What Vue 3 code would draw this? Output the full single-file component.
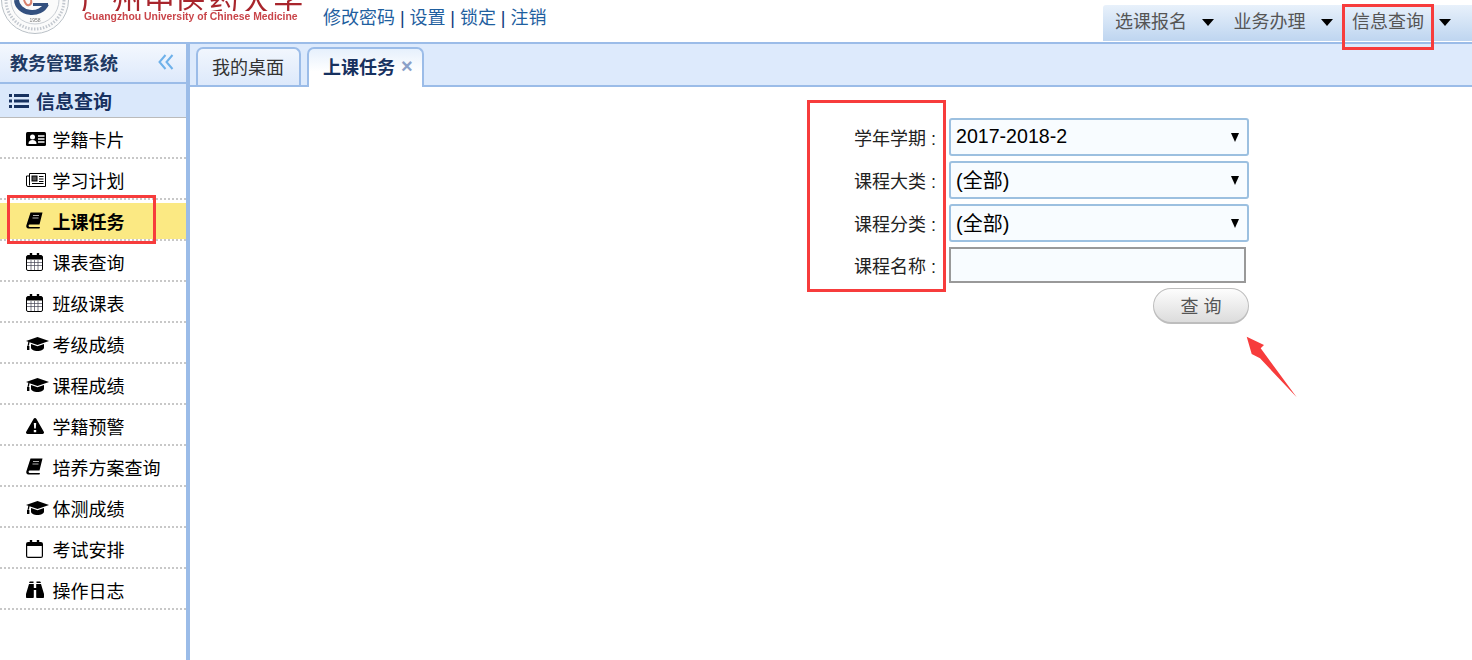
<script setup>
const menus = ['选课报名', '业务办理', '信息查询']
const links = ['修改密码', '设置', '锁定', '注销']
const items = [
  { name: '学籍卡片', icon: 'card' },
  { name: '学习计划', icon: 'news' },
  { name: '上课任务', icon: 'book', active: true },
  { name: '课表查询', icon: 'cal' },
  { name: '班级课表', icon: 'cal' },
  { name: '考级成绩', icon: 'cap' },
  { name: '课程成绩', icon: 'cap' },
  { name: '学籍预警', icon: 'warn' },
  { name: '培养方案查询', icon: 'book' },
  { name: '体测成绩', icon: 'cap' },
  { name: '考试安排', icon: 'calo' },
  { name: '操作日志', icon: 'bino' }
]
const selects = [
  { label: '学年学期', value: '2017-2018-2', cls: 'num' },
  { label: '课程大类', value: '(全部)', cls: 'cjk' },
  { label: '课程分类', value: '(全部)', cls: 'cjk' }
]
</script>

<template>
  <div class="page">
    <header class="header">
      <div class="logo">
        <svg class="emblem" width="70" height="36" viewBox="0 0 70 36">
          <circle cx="35" cy="0" r="33.500" fill="#fbfbfb" stroke="#b9c0c6" stroke-width="1" />
          <circle cx="35" cy="0" r="29" fill="none" stroke="#c3c8cf" stroke-width="3" stroke-dasharray="1.500 1.500" />
          <circle cx="35" cy="0" r="24" fill="none" stroke="#c9ced4" stroke-width="1" />
          <path d="M16.500 0a15.500 13 0 0 0 30 4" fill="none" stroke="#33507f" stroke-width="5" />
          <path d="M33 3h15v3H33z" fill="#33507f" />
          <path d="M24 0q2 6 5 5q3-1 2-5" fill="none" stroke="#d9806c" stroke-width="2" />
          <text x="35" y="22" class="year" text-anchor="middle">1958</text>
        </svg>
        <div class="wordmark">
          <div class="cn">广州中医药大学</div>
          <div class="en">Guangzhou University of Chinese Medicine</div>
        </div>
      </div>
      <nav class="links">
        <template v-for="(l, i) in links" :key="l">
          <span v-if="i" class="sep">|</span>
          <a>{{ l }}</a>
        </template>
      </nav>
      <nav class="menu">
        <div v-for="m in menus" :key="m" class="menu-item">
          <span>{{ m }}</span><i class="caret"></i>
        </div>
      </nav>
    </header>

    <div class="body">
      <aside class="side">
        <div class="side-title">
          <span>教务管理系统</span>
          <svg width="16" height="16" viewBox="0 0 16 16" fill="none" stroke="#6eb1ea" stroke-width="2">
            <path d="M7.500 1L1.500 8l6 7M14.500 1L8.500 8l6 7" />
          </svg>
        </div>
        <div class="side-head">
          <svg width="20" height="16" viewBox="0 0 20 16" fill="#17315f">
            <path d="M0 1h3v3H0zM5 1h15v3H5zM0 6.500h3v3H0zM5 6.500h15v3H5zM0 12h3v3H0zM5 12h15v3H5z" />
          </svg>
          <span>信息查询</span>
        </div>
        <ul class="list">
          <li v-for="it in items" :key="it.name" :class="['row', { active: it.active }]">
            <span class="ic">
              <svg v-if="it.icon === 'card'" width="20" height="16" viewBox="0 0 20 16">
                <rect y="1" width="20" height="14" rx="1.500" fill="#000" />
                <circle cx="6.500" cy="6" r="2.500" fill="#fff" />
                <path d="M2.500 13c0-3 1.500-4 4-4s4 1 4 4z" fill="#fff" />
                <path d="M12 5h6.500M12 8h6.500M12 11h6.500" stroke="#fff" stroke-width="1.500" />
              </svg>
              <svg v-else-if="it.icon === 'news'" width="20" height="16" viewBox="0 0 20 16" fill="none" stroke="#000">
                <path d="M3.500 1.500h16v13H2a1.500 1.500 0 0 1-1.500-1.500V4h3z" />
                <path d="M3.500 4v9.500" />
                <rect x="6" y="4" width="5" height="5" fill="#555" stroke="#000" />
                <path d="M13 4.500h4.500M13 7h4.500M13 9.500h4.500M6 11.500h11.500" />
              </svg>
              <svg v-else-if="it.icon === 'book'" width="17" height="17" viewBox="0 0 17 17">
                <path d="M4.500 .5H16.500L13.500 12.500H3.500a1.300 1.300 0 0 0 0 2.500h10.500l-.5 1.500H2.500C.7 16.500 0 15 .3 13.500z" fill="#000" />
                <path d="M7 3.500h6M6.500 6h6" stroke="#ddd" stroke-width=".8" />
              </svg>
              <svg v-else-if="it.icon === 'cal'" width="17" height="18" viewBox="0 0 17 18">
                <rect x=".5" y="2.500" width="16" height="15" rx="1.500" fill="#fff" stroke="#000" />
                <path d="M1 3h15v3.500H1z" fill="#000" />
                <path d="M5 0v5M12 0v5" stroke="#000" stroke-width="2.400" />
                <path d="M1 9.500h15M1 12.500h15M5 7v10M8.500 7v10M12 7v10" stroke="#445" stroke-width=".7" />
              </svg>
              <svg v-else-if="it.icon === 'cap'" width="23" height="14" viewBox="0 0 23 14">
                <path d="M11.500 0L23 4l-11.500 4L3.500 5.200 3 8.500 1.500 9l.8-4.200L0 4z" fill="#000" />
                <path d="M5 7l6.500 2.200L18 7v3.500C18 12.500 15 14 11.500 14S5 12.500 5 10.500z" fill="#000" />
                <path d="M1 9h2.400v4H1z" fill="#000" />
              </svg>
              <svg v-else-if="it.icon === 'warn'" width="18" height="16" viewBox="0 0 18 16">
                <path d="M9 0a1.500 1.500 0 0 1 1.300.8l7.500 13a1.500 1.500 0 0 1-1.300 2.200h-15a1.500 1.500 0 0 1-1.300-2.200L7.700.8A1.500 1.500 0 0 1 9 0z" fill="#000" />
                <path d="M7.800 5h2.400l-.4 5.500H8.200zM7.800 12h2.400v2.200H7.800z" fill="#fff" />
              </svg>
              <svg v-else-if="it.icon === 'calo'" width="17" height="18" viewBox="0 0 17 18">
                <rect x=".6" y="2.600" width="15.800" height="14.800" rx="1.500" fill="#fff" stroke="#000" stroke-width="1.200" />
                <path d="M1 3h15v3H1z" fill="#000" />
                <path d="M5 0v5M12 0v5" stroke="#000" stroke-width="2.400" />
              </svg>
              <svg v-else width="18" height="17" viewBox="0 0 18 17">
                <path d="M3 2h4.500V.5H3.800zM10.500 2H15L14.200.5H10.500z" fill="#000" />
                <path d="M3 3h4.800v4h2.400V3H15l3 10v3c0 .6-.4 1-1 1h-5.800c-.6 0-1-.4-1-1V9H7.800v7c0 .6-.4 1-1 1H1c-.6 0-1-.4-1-1v-3z" fill="#000" />
              </svg>
            </span>
            <span>{{ it.name }}</span>
          </li>
        </ul>
      </aside>

      <main class="main">
        <div class="tabs">
          <div class="tab">我的桌面</div>
          <div class="tab current">上课任务<span class="close">×</span></div>
        </div>
        <form class="form" @submit.prevent>
          <template v-for="s in selects" :key="s.label">
            <label class="lbl">{{ s.label }} :</label>
            <div class="sel">
              <select :class="['ctl', s.cls]">
                <option>{{ s.value }}</option>
              </select>
              <i class="sel-caret"></i>
            </div>
          </template>
          <label class="lbl">课程名称 :</label>
          <input class="txt" type="text" />
          <div class="act">
            <button class="btn" type="button">查 询</button>
          </div>
        </form>
      </main>
    </div>

    <div class="mark mark-menu"></div>
    <div class="mark mark-side"></div>
    <div class="mark mark-form"></div>
    <svg class="arrow" width="60" height="70" viewBox="0 0 60 70">
      <path d="M6.700 6.700L24 15l-3.300 3.300L56.700 67.300 20 28.300 11.700 24z" fill="#f73c3c" />
    </svg>
  </div>
</template>

<style>
html, body { margin: 0; background: #fff; }
</style>

<style scoped>
.page {
  position: relative;
  width: 1472px;
  height: 660px;
  overflow: hidden;
  display: flex;
  flex-direction: column;
  background: #fff;
  font-family: "Liberation Sans", "Noto Sans CJK SC", sans-serif;
  font-size: 18px;
  color: #000;
}
.header {
  flex: none;
  height: 42px;
  display: flex;
  align-items: flex-start;
  overflow: hidden;
}
.logo { display: flex; width: 323px; flex: none; }
.emblem { flex: none; display: block; filter: blur(.4px); }
.year { font-size: 5px; fill: #777; font-family: "Liberation Sans", sans-serif; }
.wordmark { margin-left: 10px; width: 226px; filter: blur(.45px); }
.cn {
  height: 11px;
  overflow: hidden;
  display: flex;
  align-items: flex-end;
  font-family: "Noto Sans CJK SC", sans-serif;
  font-weight: 400;
  font-size: 30px;
  line-height: 25px;
  letter-spacing: 2.200px;
  color: #a8252c;
  white-space: nowrap;
}
.en {
  font-size: 10.400px;
  line-height: 10px;
  margin: 1px 0 0 4px;
  font-weight: 700;
  color: #c9454a;
  white-space: nowrap;
}
.links {
  display: flex;
  gap: 4.900px;
  height: 36px;
  line-height: 36px;
  color: #1f5f9f;
}
.sep { color: #123a80; }
.menu {
  margin: 5px 0 0 auto;
  width: 369px;
  height: 36px;
  flex: none;
  display: flex;
  padding: 0 0 2px 12px;
  box-sizing: border-box;
  background: linear-gradient(#e8f1fb, #bed5f0);
  border-radius: 3px 0 0 0;
}
.menu-item {
  width: 118.500px;
  flex: none;
  display: flex;
  align-items: center;
  color: #555;
  line-height: 34px;
}
.caret {
  margin: 0 0 0 15px;
  border-left: 6.500px solid transparent;
  border-right: 6.500px solid transparent;
  border-top: 7px solid #000;
}
.body { flex: 1; min-height: 0; display: flex; border-top: 2px solid #9bbce8; }
.side {
  width: 186px;
  flex: none;
  border-right: 4px solid #9bbce8;
}
.side-title {
  height: 36px;
  border-bottom: 2px solid #9bbce8;
  display: flex;
  align-items: center;
  justify-content: space-between;
  padding: 0 12px 2px 10px;
  background: linear-gradient(#f4f8fe, #dde9fb);
  font-weight: 700;
  color: #1f3a63;
}
.side-head {
  height: 33px;
  border-bottom: 1px solid #bbb;
  display: flex;
  align-items: center;
  gap: 7px;
  padding-left: 9px;
  background: #dae8fb;
  font-size: 19px;
  font-weight: 700;
  color: #17315f;
}
.list { margin: 0; padding: 0; list-style: none; }
.row {
  height: 41px;
  box-sizing: border-box;
  border-bottom: 2px dotted #c8c8c8;
  display: flex;
  align-items: center;
  padding: 2px 0 0 26px;
}
.row.active {
  background: linear-gradient(transparent 3px, #fbe983 3px);
  font-weight: 700;
}
.ic { width: 26.500px; flex: none; display: flex; align-items: center; }
.main { flex: 1; min-width: 0; }
.tabs {
  height: 41px;
  border-bottom: 2px solid #9bbce8;
  background: #ddeafc;
  display: flex;
  align-items: flex-end;
  gap: 6px;
  padding-left: 6px;
}
.tab {
  width: 105px;
  height: 38px;
  box-sizing: border-box;
  border: 2px solid #9bbce8;
  border-bottom: 0;
  border-radius: 7px 7px 0 0;
  background: linear-gradient(#f1f6fd, #dde9fb);
  display: flex;
  align-items: center;
  justify-content: center;
  padding: 0 1px 2px 0;
  color: #333;
}
.tab.current {
  width: 117px;
  height: 40px;
  margin-bottom: -2px;
  background: linear-gradient(#e6f0fc, #fff 60%);
  font-weight: 700;
  color: #17315f;
  justify-content: flex-start;
  padding: 0 0 5px 14px;
}
.close {
  margin-left: 6px;
  color: #8aa0c8;
  font-size: 20px;
  line-height: 18px;
}
.form {
  margin: 31px 0 0 619px;
  width: 440px;
  display: grid;
  grid-template-columns: 140px 300px;
  row-gap: 5px;
  align-items: center;
}
.lbl { text-align: right; color: #222; white-space: nowrap; padding-right: 13px; }
.sel { position: relative; height: 38px; }
.ctl {
  appearance: none;
  width: 100%;
  height: 38px;
  box-sizing: border-box;
  border: 2px solid #9cc0e0;
  border-radius: 3px;
  background: #f8fcff;
  padding: 0 5px;
  font: 20px "Liberation Sans", "Noto Sans CJK SC", sans-serif;
  color: #000;
  outline: 0;
}
.ctl.num { font-size: 19.600px; padding-bottom: 2px; }
.ctl.cjk { padding-top: 2px; }
.sel-caret {
  position: absolute;
  right: 10px;
  top: 15px;
  border-left: 4.500px solid transparent;
  border-right: 4.500px solid transparent;
  border-top: 9px solid #000;
}
.txt {
  width: 297px;
  height: 36px;
  box-sizing: border-box;
  border: 2px solid #999;
  background: #f8fcff;
  padding: 0;
  outline: 0;
}
.act {
  grid-column: 2;
  display: flex;
  justify-content: flex-end;
}
.btn {
  width: 96px;
  height: 36px;
  border: 1px solid #bdbdbd;
  border-bottom-width: 2px;
  border-radius: 18px;
  background: linear-gradient(#fdfdfd, #dcdcdc);
  font: 18px "Liberation Sans", "Noto Sans CJK SC", sans-serif;
  color: #555;
  padding: 0 0 2px;
}
.mark { position: absolute; box-sizing: border-box; border: 3px solid #f73c3c; pointer-events: none; }
.mark-menu { left: 1342px; top: 4px; width: 92px; height: 46px; }
.mark-side { left: 7px; top: 195px; width: 149px; height: 49px; }
.mark-form { left: 807px; top: 100px; width: 139px; height: 192px; }
.arrow { position: absolute; left: 1240px; top: 330px; }
</style>
